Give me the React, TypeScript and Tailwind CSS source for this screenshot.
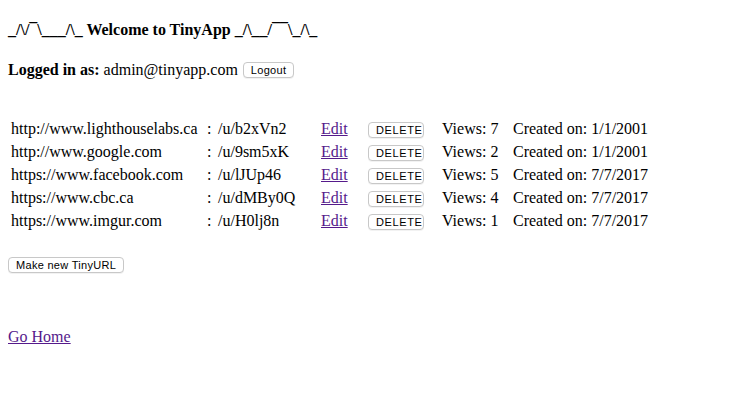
import React from "react";

const rows = [
  { url: "http://www.lighthouselabs.ca", short: "/u/b2xVn2", views: 7, date: "1/1/2001" },
  { url: "http://www.google.com", short: "/u/9sm5xK", views: 2, date: "1/1/2001" },
  { url: "https://www.facebook.com", short: "/u/lJUp46", views: 5, date: "7/7/2017" },
  { url: "https://www.cbc.ca", short: "/u/dMBy0Q", views: 4, date: "7/7/2017" },
  { url: "https://www.imgur.com", short: "/u/H0lj8n", views: 1, date: "7/7/2017" },
];

function Btn({ children, className = "" }: { children: React.ReactNode; className?: string }) {
  return (
    <button
      className={
        "h-[16px] px-[7px] bg-white border border-[#c8c8c8] rounded-[4px] text-[11px] leading-[14px] tracking-[0.3px] text-black font-['Liberation_Sans',Arial,sans-serif] shadow-[0_1px_0_rgba(0,0,0,0.05)] " +
        className
      }
    >
      {children}
    </button>
  );
}

export default function App() {
  return (
    <div className="w-[743px] h-[402px] bg-white text-black font-['Liberation_Serif','Times_New_Roman',serif] text-[16px] px-[8px] flex flex-col overflow-hidden">
      <h4 className="mt-[21px] h-[18px] leading-[18px] font-bold whitespace-pre">
        {"_/\\/¯\\___/\\_ Welcome to TinyApp _/\\__/¯¯\\_/\\_"}
      </h4>
      <div className="mt-[22px] h-[18px] flex items-center whitespace-pre">
        <span className="font-bold">Logged in as: </span>
        <span>admin@tinyapp.com </span>
        <Btn className="ml-[1px]">Logout</Btn>
      </div>
      <div className="mt-[39px] ml-[3px] flex flex-col gap-[2px]">
        {rows.map((r) => (
          <div
            key={r.short}
            className="h-[21px] grid grid-cols-[196px_11px_103px_47px_74px_71px_auto] items-center leading-[18px]"
          >
            <span>{r.url}</span>
            <span>:</span>
            <span>{r.short}</span>
            <a href="#" className="text-[#551a8b] underline">Edit</a>
            <span>
              <Btn className="w-[56px] px-0 text-[11.5px] tracking-[0.6px]">DELETE</Btn>
            </span>
            <span>Views: {r.views}</span>
            <span>Created on: {r.date}</span>
          </div>
        ))}
      </div>
      <div className="mt-[21px]">
        <Btn>Make new TinyURL</Btn>
      </div>
      <div className="mt-[52px] h-[18px] leading-[18px]">
        <a href="#" className="text-[#551a8b] underline">Go Home</a>
      </div>
    </div>
  );
}
